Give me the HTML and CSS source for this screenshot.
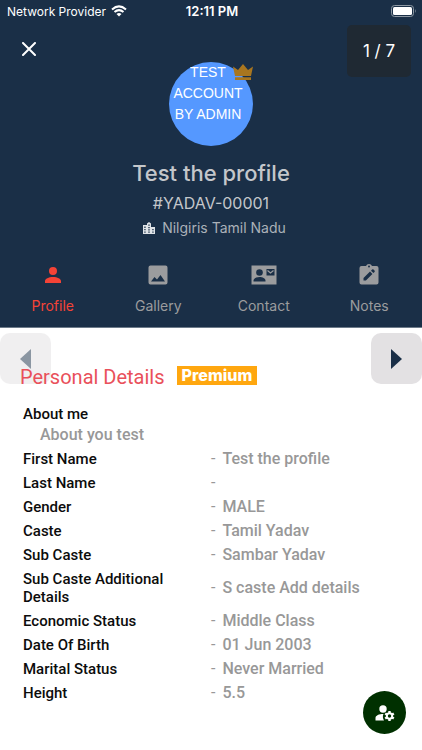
FILE: index.html
```html
<!DOCTYPE html>
<html lang="en">
<head>
<meta charset="utf-8">
<meta name="viewport" content="width=device-width, initial-scale=1">
<title>Member profile</title>
<link rel="stylesheet" href="styles.css">
</head>
<body>
<header class="hero">
  <div class="status">
    <span class="carrier">Network Provider
      <svg width="16" height="12" viewBox="0 0 16 12" fill="none" stroke="currentColor" stroke-width="2" aria-hidden="true"><path d="M1 4.500Q8-1.800 15 4.500M3.500 7Q8 3.200 12.500 7"/><path d="M8 11.500 5.500 9Q8 7 10.500 9Z" fill="currentColor" stroke="none"/></svg>
    </span>
    <span class="clock">12:11 PM</span>
    <svg class="battery" width="26" height="12" viewBox="0 0 26 12" aria-hidden="true"><rect x=".5" y=".5" width="22" height="11" rx="3" fill="none" stroke="#8d98a3"/><rect x="2" y="2" width="19" height="8" rx="1.500" fill="#fff"/><path d="M24 4q1.500 2 0 4z" fill="#8d98a3"/></svg>
  </div>
  <button class="close" aria-label="Close"><svg width="14" height="14" viewBox="0 0 14 14" fill="none" stroke="currentColor" stroke-width="2" stroke-linecap="round"><path d="M1 1 13 13M13 1 1 13"/></svg></button>
  <div class="counter">1 / 7</div>
  <div class="avatar">
    <span>TEST<br>ACCOUNT<br>BY ADMIN</span>
    <svg class="crown" width="20" height="16" viewBox="0 0 20 16" aria-hidden="true"><path d="M0 2.500 5 6 10 0 15 6 20 2.500 18 12H2ZM2 13.300H18V16H2Z" fill="#a9761f"/></svg>
  </div>
  <h1 class="name">Test the profile</h1>
  <p class="member">#YADAV-00001</p>
  <p class="place"><svg width="12" height="12" viewBox="0 0 12 12" aria-hidden="true"><path fill="#dfe3e7" fill-rule="evenodd" d="M0 3H4V1.500L6 0 8 1.500V5H12V12H0ZM1.300 4.500V6H2.600V4.500ZM1.300 7V8.300H2.600V7ZM1.300 9.500V10.800H2.600V9.500ZM5.300 2.500V3.800H6.700V2.500ZM5.300 5V6.200H6.700V5ZM5.300 7.200V8.500H6.700V7.200ZM5.300 9.500V10.800H6.700V9.500ZM9.300 7V8.300H10.600V7ZM9.300 9.500V10.800H10.600V9.500Z"/></svg>Nilgiris Tamil Nadu</p>
  <nav class="tabs">
    <a href="#profile" class="tab active" aria-current="page"><svg width="24" height="24" viewBox="0 0 24 24"><path d="M12 4a4 4 0 0 1 0 8 4 4 0 0 1 0-8M12 14c4.420 0 8 1.790 8 4v2H4v-2c0-2.210 3.580-4 8-4Z"/></svg>Profile</a>
    <a href="#gallery" class="tab"><svg width="24" height="24" viewBox="0 0 24 24"><path d="M21.500 19.500v-15a2 2 0 0 0-2-2h-15a2 2 0 0 0-2 2v15a2 2 0 0 0 2 2h15a2 2 0 0 0 2-2ZM5 18.500l3.500-4.500 2.500 2.500 3.500-4.500 4.500 6.500Z" fill-rule="evenodd"/></svg>Gallery</a>
    <a href="#contact" class="tab"><svg width="26" height="24" viewBox="0 0 26 24"><path d="M.5 2.500h25v19H.5Z"/><g fill="#1a2f47"><circle cx="8.500" cy="9.500" r="3.300"/><path d="M2.500 18.500v-1c0-2 3-3.500 6-3.500s6 1.500 6 3.500v1ZM15.500 6h8v6.500h-8Z"/></g><path d="m16.500 7.500 3 2.500 3-2.500" fill="none" stroke="#9b9c9e" stroke-width="1.200"/></svg>Contact</a>
    <a href="#notes" class="tab"><svg width="24" height="24" viewBox="0 0 24 24"><path d="M19.500 3H15a3.200 3.200 0 0 0-6 0H4.500a2 2 0 0 0-2 2v14.500a2 2 0 0 0 2 2h15a2 2 0 0 0 2-2V5a2 2 0 0 0-2-2Z"/><circle cx="12" cy="3.500" r="1" fill="#1a2f47"/><path d="M6.500 17.500v-2.400l6.500-6.500 2.400 2.400-6.500 6.500ZM14 7.700l1.100-1.100q.7-.7 1.400 0l1 1q.7.7 0 1.400l-1.100 1.100Z" fill="#1a2f47"/></svg>Notes</a>
  </nav>
</header>
<main class="details" id="profile">
  <button class="step prev" aria-label="Previous profile"><svg width="11" height="20" viewBox="0 0 11 20"><path d="M11 0V20L0 10Z" fill="currentColor"/></svg></button>
  <button class="step next" aria-label="Next profile"><svg width="11" height="20" viewBox="0 0 11 20"><path d="M0 0V20L11 10Z" fill="currentColor"/></svg></button>
  <div class="heading"><h2>Personal Details</h2><span class="badge">Premium</span></div>
  <dl class="facts">
    <div class="about"><dt>About me</dt><dd>About you test</dd></div>
    <div class="fact"><dt>First Name</dt><dd>Test the profile</dd></div>
    <div class="fact"><dt>Last Name</dt><dd></dd></div>
    <div class="fact"><dt>Gender</dt><dd>MALE</dd></div>
    <div class="fact"><dt>Caste</dt><dd>Tamil Yadav</dd></div>
    <div class="fact"><dt>Sub Caste</dt><dd>Sambar Yadav</dd></div>
    <div class="fact"><dt>Sub Caste Additional Details</dt><dd>S caste Add details</dd></div>
    <div class="fact"><dt>Economic Status</dt><dd>Middle Class</dd></div>
    <div class="fact"><dt>Date Of Birth</dt><dd>01 Jun 2003</dd></div>
    <div class="fact"><dt>Marital Status</dt><dd>Never Married</dd></div>
    <div class="fact"><dt>Height</dt><dd>5.5</dd></div>
  </dl>
</main>
<button class="manage" aria-label="Manage account"><svg width="20" height="16" viewBox="0 0 20 16"><g fill="#fff"><circle cx="8" cy="4" r="3.700"/><path d="M.5 15.500V13c0-2.500 3.500-4 8-4q-1.500 3 .5 6.500Z"/><circle cx="14.500" cy="11" r="3.700"/><path d="M13.300 6h2.400v10h-2.400Z"/><path d="M13.300 6h2.400v10h-2.400Z" transform="rotate(60 14.500 11)"/><path d="M13.300 6h2.400v10h-2.400Z" transform="rotate(120 14.500 11)"/></g><circle cx="14.500" cy="11" r="1.700" fill="#003000"/></svg></button>
</body>
</html>
```
FILE: styles.css
```css
* { box-sizing: border-box; }
body { margin: 0; min-height: 100vh; background: #fff; font-family: Roboto, sans-serif; }
h1, h2, p, dl, dd { margin: 0; }
button { border: 0; padding: 0; cursor: pointer; }
svg { display: block; flex: none; }

.hero {
  position: relative;
  display: flex;
  flex-direction: column;
  align-items: center;
  background: #1a2f47;
  color: #c4c7cb;
  font-family: Inter, sans-serif;
  border-bottom: 1px solid #6d7b8a;
}
.status {
  align-self: stretch;
  display: grid;
  grid-template-columns: 1fr auto 1fr;
  align-items: center;
  height: 22px;
  padding: 0 5px 0 7px;
  color: #fff;
  font-size: 12px;
}
.carrier { display: flex; align-items: center; gap: 5px; }
.clock { font-size: 13px; font-weight: 600; }
.battery { justify-self: end; }
.close {
  position: absolute;
  top: 35px;
  left: 15px;
  display: grid;
  place-items: center;
  width: 28px;
  height: 28px;
  background: none;
  color: #fff;
}
.counter {
  position: absolute;
  top: 25px;
  right: 11px;
  display: grid;
  place-items: center;
  width: 64px;
  height: 52px;
  border-radius: 5px;
  background: #1f2933;
  color: #fff;
  font-size: 17px;
}
.avatar {
  position: relative;
  width: 84px;
  height: 84px;
  margin-top: 40px;
  border-radius: 50%;
  background: #5598ff;
  color: #fff;
  font-family: "Liberation Sans", sans-serif;
  font-size: 14px;
  line-height: 21px;
  text-align: center;
}
.avatar span { display: block; white-space: nowrap; padding-right: 6px; }
.crown { position: absolute; top: 2px; right: 0; }
.name { margin-top: 12px; font-size: 22px; line-height: 30px; font-weight: 500; }
.member { margin-top: 4px; font-size: 16px; line-height: 22px; font-weight: 400; }
.place { display: flex; align-items: center; gap: 7px; margin-top: 4px; padding-left: 7px; font-size: 14px; line-height: 20px; color: #abb1b8; }
.tabs { align-self: stretch; display: grid; grid-template-columns: repeat(4, 1fr); margin-top: 25px; padding-bottom: 11px; }
.tab {
  display: flex;
  flex-direction: column;
  align-items: center;
  gap: 9px;
  color: #9b9c9e;
  font-size: 14px;
  line-height: 20px;
  text-decoration: none;
}
.tab svg { fill: currentColor; }
.tab.active { color: #f44336; }

.details { position: relative; padding: 36px 20px 40px; }
.step {
  position: absolute;
  top: 5px;
  display: grid;
  place-items: center;
  width: 51px;
  height: 51px;
  border-radius: 10px;
  background: #e3e1e3;
  color: #1a2f47;
}
.prev { left: 0; opacity: .5; }
.next { right: 0; }
.heading { position: relative; display: flex; align-items: center; gap: 12px; height: 26px; }
.heading h2 { font-size: 20px; line-height: 26px; font-weight: 400; color: #e9505a; }
.badge {
  margin-bottom: 3px;
  padding: 0 5px;
  background: #ffa70f;
  color: #fff;
  font: 800 16px/19px Inter, sans-serif;
}
.facts { padding: 15px 3px 0; font-weight: 500; line-height: 18px; }
.facts dt { color: #0c0c0c; font-size: 15px; }
.facts dd { color: #989898; font-size: 16px; }
.about { display: grid; gap: 3px; margin-bottom: 6px; }
.about dd { padding-left: 17px; }
.fact { display: grid; grid-template-columns: 1fr 1fr; align-items: center; margin-bottom: 6px; }
.fact dt { padding-right: 30px; }
.fact dd { display: flex; gap: 7px; }
.fact dd::before { content: "-"; font-weight: 400; }
.manage {
  position: fixed;
  right: 16px;
  bottom: 16px;
  display: grid;
  place-items: center;
  width: 43px;
  height: 43px;
  border-radius: 50%;
  background: #003000;
}
```
